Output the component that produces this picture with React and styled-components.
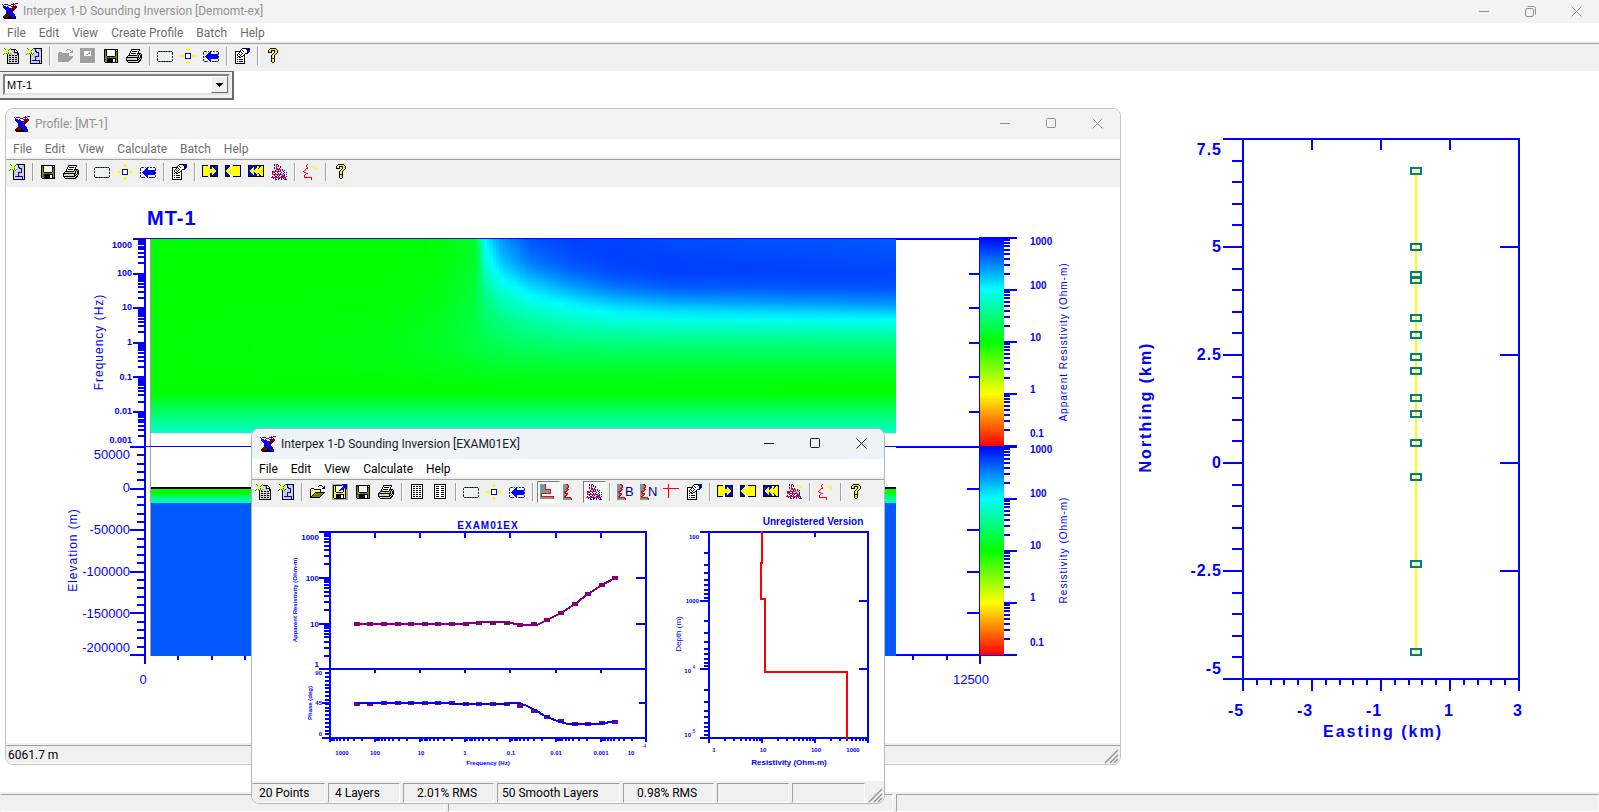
import React from 'react';
import styled, { createGlobalStyle } from 'styled-components';

const GlobalStyle = createGlobalStyle`
  *, *::before, *::after { box-sizing: border-box; }
  body {
    margin: 0;
    background: #fff;
    color: #000;
    font: 12px/16px Roboto, "Liberation Sans", sans-serif;
  }
`;

/* ---------- shell ---------- */

const Desktop = styled.div`
  position: relative;
  display: flex;
  flex-direction: column;
  min-height: 100vh;
  background: #fff;
`;

const Workspace = styled.main`
  flex: 1;
  display: flex;
  align-items: flex-start;
  justify-content: flex-end;
`;

const ChildWindow = styled.section`
  position: absolute;
  left: ${(p) => p.$left}px;
  top: ${(p) => p.$top}px;
  width: ${(p) => p.$width}px;
  display: flex;
  flex-direction: column;
  overflow: hidden;
  background: #fff;
  border: 1px solid ${(p) => (p.$active ? '#b4b8bc' : '#c4c4c4')};
  border-radius: 8px;
`;

const TitleBar = styled.header`
  display: flex;
  align-items: center;
  height: ${(p) => (p.$main ? 23 : 30)}px;
  padding-left: ${(p) => (p.$main ? 2 : 8)}px;
  padding-bottom: 1px;
  background: ${(p) => (p.$active ? '#edf3f9' : '#f3f3f3')};
  color: ${(p) => (p.$active ? '#1b1b1b' : '#919191')};
`;

const TitleText = styled.h1`
  flex: 1;
  margin: 0 0 0 5px;
  font-size: 12px;
  font-weight: 400;
`;

const Caption = styled.button`
  width: 46px;
  height: 100%;
  padding: 0;
  border: 0;
  background: none;
  color: inherit;
  display: flex;
  align-items: center;
  justify-content: center;
`;

const MenuBar = styled.nav`
  display: flex;
  height: 20px;
  background: #fff;
  border-bottom: 2px solid #f0f0f0;
  color: ${(p) => (p.$active ? '#000' : '#6d6d6d')};
`;

const MenuItem = styled.button`
  padding: 2px 6px 0 7px;
  border: 0;
  background: none;
  color: inherit;
  font: inherit;
`;

const Tools = styled.div`
  display: flex;
  align-items: flex-start;
  height: 28px;
  padding-top: 1px;
  background: #f0f0f0;
  border-top: 1px solid #a0a0a0;
`;

const ToolButton = styled.button`
  display: flex;
  align-items: center;
  width: 23px;
  height: 22px;
  padding: 0 0 0 2px;
  border: 1px solid;
  border-color: ${(p) => (p.$pressed ? '#808080 #fff #fff #808080' : 'transparent')};
  background: ${(p) => (p.$pressed ? '#f8f8f8' : 'none')};
`;

const Divider = styled.span`
  width: 2px;
  height: 18px;
  margin: 2px 3px;
  border-left: 1px solid #a0a0a0;
  border-right: 1px solid #fff;
`;

const DialogBar = styled.div`
  align-self: flex-start;
  width: 234px;
  height: 29px;
  padding: 2px 2px 3px 3px;
  background: #f0f0f0;
  border: solid #696969;
  border-width: 1px 2px 2px 0;
`;

const Combo = styled.div`
  position: relative;
  height: 21px;
  background: #fff;
  border: 2px solid;
  border-color: #808080 #e3e3e3 #e3e3e3 #808080;
`;

const ComboSelect = styled.select`
  appearance: none;
  width: 100%;
  height: 17px;
  padding: 0 20px 0 2px;
  border: 0;
  background: none;
  color: #000;
  font: 11px/16px "Liberation Sans", sans-serif;
`;

const ComboArrow = styled.span`
  position: absolute;
  top: 0;
  right: 0;
  width: 17px;
  height: 17px;
  display: flex;
  align-items: center;
  justify-content: center;
  background: #f0f0f0;
  border: 1px solid;
  border-color: #fff #696969 #696969 #fff;
  pointer-events: none;
`;

const StatusBar = styled.footer`
  display: flex;
  gap: 3px;
  height: ${(p) => p.$height || 20}px;
  padding-top: 2px;
  background: #f0f0f0;
`;

const StatusCell = styled.span`
  flex: ${(p) => (p.$width ? `0 0 ${p.$width}px` : '1')};
  display: flex;
  align-items: center;
  padding-left: ${(p) => p.$indent || 1}px;
  border: 1px solid;
  border-color: #a0a0a0 #fff #fff ${(p) => (p.$open ? 'transparent' : '#a0a0a0')};
  white-space: nowrap;
`;

const GripBox = styled.span`
  align-self: flex-end;
  width: 16px;
  height: 16px;
  margin-left: ${(p) => (p.$overlap ? -20 : 0)}px;
`;

const Plot = styled.svg`
  display: block;
  width: ${(p) => (p.$width ? `${p.$width}px` : '100%')};
  shape-rendering: crispEdges;
`;

const PlotText = styled.text`
  fill: #00f;
  font-family: "Liberation Sans", Arial, sans-serif;
  font-size: ${(p) => p.$size}px;
  font-weight: ${(p) => (p.$bold ? 700 : 400)};
  letter-spacing: ${(p) => p.$track || 0}px;
  text-anchor: ${(p) => p.$anchor || 'middle'};
  dominant-baseline: central;
`;

/* ---------- icons ---------- */

const INK = {
  K: '#000000', W: '#ffffff', Y: '#ffff00', O: '#808000', B: '#0000ff', N: '#000080',
  T: '#008080', R: '#ff0000', G: '#a0a0a0', g: '#d0d0d0', M: '#800000', S: '#6b9f9f',
  P: '#600090', D: '#2f4f4f',
};

const ART = {
  logo: [
    '...........P.PPP', 'P.PPPP...PPPP...', '.P....PPP..P.M..', '.BBB.P...PBMMMM.',
    '.BBBBBB...MMMMM.', '..BBBBBBKMMMMM..', '...BBBBBBMMMM...', '....BBBBBKMM....',
    '....BBBBBBM.....', '....MBBBBBB.....', '....MKBBBBBB....', '...MMMKBBBBBB...',
    '..MMMMMKBBBBB...', '.KMMMMMKBBBBBB..', '.KKKMKKKKKBBBK..', '..KKKKKKKKKKKK..',
  ],
  newDoc: [
    '.T..Y..T........', '..T.Y.T.KKKKK...', 'Y..YYT.YYggKWK..', '.YYYYYY.gggKWWK.',
    '...YYTY.gggKKKK.', '.TYTYT.TggggggKK', 'T..YK.T.ggggggKK', '...YKgKKgKKgKKgK',
    '....KggggggggggK', '....KgKKgKKgKKgK', '....KggggggggggK', '....KgKKgKKgKKgK',
    '....KggggggggggK', '....KgKKgKKgKKgK', '....KggggggggggK', '....KKKKKKKKKKKK',
  ],
  newMap: [
    '.T..Y..TKKKKKKKK', '..T.Y.T.gBggggGK', 'Y..YYT.YgBggggGK', '.YYYYYY.gBBggggK',
    '...YYTY.ggBBBggK', '.TYTYT.TggggBggK', 'T..YK.T.ggggBggK', '...YKgggggggBggK',
    '....KggggBBBBggK', '....KggggBgggggK', '....KggggBgggggK', '....KggggBgggggK',
    '....KgBBBBBBBBgK', '....KggggggggBgK', '....KggggggggBgK', '....KKKKKKKKKKKK',
  ],
  open: [
    '................', '..........KKK...', '.........K...K.K', '..............KK',
    '..KKK........KKK', '.KYWYKKKKKKK....', '.KWYWYWYWYWK....', '.KYWYWYWYWYK....',
    '.KWYWYKKKKKKKKKK', '.KYWYKOOOOOOOOK.', '.KWYKOOOOOOOOK..', '.KYKOOOOOOOOK...',
    '.KKOOOOOOOOK....', '.KKKKKKKKKK.....', '................', '................',
  ],
  openOff: [
    '................', '..........GGG...', '.........G...G.G', '..............GG',
    '..GGG........GGG', '.GGGGGGGGGGG....', '.GGGGGGGGGGG....', '.GGGGGGGGGGG....',
    '.GGGGGGGGGGGGGGG', '.GGGGGGGGGGGGGGG', '.GGGGGGGGGGGGGG.', '.GGGGGGGGGGGGG..',
    '.GGGGGGGGGGGG...', '.GGGGGGGGGGG....', '................', '................',
  ],
  exportOff: [
    'GGGGGGGGGGGGGGGW', 'GGGGGGGGGGGGGGGW', 'GGGGGGGGGGGGGGGW', 'GGGGWWWWWWWGGGGW',
    'GGGGWWWWWGWGGGGW', 'GGGGWWWWGGWGGGGW', 'GGGGWWGGWWWGGGGW', 'GGGGWWWWWWWGGGGW',
    'GGGGGGGGGGGGGGGW', 'GGGGGGGGGGGGGGGW', 'GGGGGGGGGGGGGGGW', 'GGGGGGGGGGGGGGGW',
    'GGGGGGGGGGGGGGGW', 'GGGGGGGGGGGGGGGW', 'GGGGGGGGGGGGGGGW', 'WWWWWWWWWWWWWWWW',
  ],
  export: [
    'GGGGGGGGGGBBBBBG', 'GKKKKKKKKKGBBBBG', 'GKYKWWWWWWWBBBBG', 'GKYKWWWWWWBBBBBG',
    'GKYKWWWWWBBBGKBG', 'GKYKWWWWBBBKYKGG', 'GKYKWWWBBWWKYKGG', 'GKYKWWWWWWWKYKGG',
    'GKYYKKKKKKKYYKGG', 'GKYYYYYYYYYYYKGG', 'GKYYKKKKKKKKYKGG', 'GKYYKKKKKWWKYKGG',
    'GKYYKKKKKWWKYKGG', 'GKYYKKKKKWWKYKGG', 'GGKKKKKKKKKKKKGG', 'GGGGGGGGGGGGGGGG',
  ],
  save: [
    '................', '.KKKKKKKKKKKKKK.', '.KOKWWWWWWWWKWK.', '.KOKWWWWWWWWKKK.',
    '.KOKWWWWWWWWKOK.', '.KOKWWWWWWWWKOK.', '.KOKWWWWWWWWKOK.', '.KOKWWWWWWWWKOK.',
    '.KOOKKKKKKKKOOK.', '.KOOOOOOOOOOOOK.', '.KOOKKKKKKKKKOK.', '.KOOKKKKKKWWKOK.',
    '.KOOKKKKKKWWKOK.', '.KOOKKKKKKWWKOK.', '..KKKKKKKKKKKKK.', '................',
  ],
  print: [
    '................', '.....KKKKKKKKK..', '.....KWWWWWWWK..', '....KWKKKKKWK...',
    '....KWWWWWWWK...', '...KWKKKKKWKKKK.', '...KWWWWWWWKgKgK', '..KKKKKKKKKgKgKK',
    '.KggggggggggKgKK', 'KKKKKKKKKKKKKgKK', 'KggggggYYYgKgKgK', 'KggggggggggKKgK.',
    'KKKKKKKKKKKKgKK.', '.KggggggggggKK..', '..KKKKKKKKKKK...', '................',
  ],
  fit: [
    '.......YY.......', '......YYYY......', '.......YY.......', '................',
    '................', '.....BBBBBB.....', '..Y..BWWWWB..Y..', 'YYYY.BWWWWB.YYYY',
    'YYYY.BWWWWB.YYYY', '..Y..BWWWWB..Y..', '.....BBBBBB.....', '................',
    '................', '.......YY.......', '......YYYY......', '.......YY.......',
  ],
  marquee: [
    '................', '................', '................', '.DKDKDDKDKDDKDK.',
    'D..............D', 'K..............K', '...............D', 'D...............',
    'K..............K', '...............D', 'D...............', 'K..............D',
    'D..............K', '.DKDDKDKDDKDKDD.', '................', '................',
  ],
  recall: [
    '................', '................', '................', '.DKD.D.BD.KD.DK.',
    'D.....BB.......D', 'K....BBB.......K', 'D...BBBBBBBBBBBD', '...BBBBBBBBBBBB.',
    'K.BBBBBBBBBBBBBK', 'D..BBBBBBBBBBBBD', '....BBBBBBBBBBB.', 'K....BBB.......D',
    'D.....BB.......K', '.DKDD..B.DKDKDD.', '................', '................',
  ],
  props: [
    '........KKKKKBNB', '.......KWWWWKBNB', '......KWKWWWWKNB', '.KKKKKKWWKWWWKNB',
    '.KWWWKWKWWWWWKB.', '.KWWKWWWKWWKKK..', '.KWKWKWKWWK.....', '.KWKWWKWWKK.....',
    '.KWWKKWKKWK.....', '.KWKWKKWWWK.....', '.KWWWWWWWWK.....', '.KWKWKKKKWK.....',
    '.KWWWWWWWWK.....', '.KWKWKKKKWK.....', '.KWWWWWWWWK.....', '.KKKKKKKKKK.....',
  ],
  help: [
    '.....KKKKKK.....', '....KYYYYYYK....', '...KYYKKKKYYK...', '...KYYK..KYYK...',
    '...KKKK..KYYK...', '........KYYK....', '.......KYYK.....', '......KYYK......',
    '......KYYK......', '......KYYK......', '......KKKK......', '......KYYK......',
    '......KYYK......', '......KYYK......', '.......KK.......', '................',
  ],
  table: [
    '..KKKKKKKKKKKK..', '..KWWWWWWWWWWK..', '..KWKKWKKWKKWK..', '..KWWWWWWWWWWK..',
    '..KWKKWKKWKKWK..', '..KWWWWWWWWWWK..', '..KWKKWKKWKKWK..', '..KWWWWWWWWWWK..',
    '..KWKKWKKWKKWK..', '..KWWWWWWWWWWK..', '..KWKKWKKWKKWK..', '..KWWWWWWWWWWK..',
    '..KWKKWKKWKKWK..', '..KWWWWWWWWWWK..', '..KKKKKKKKKKKK..', '................',
  ],
  list: [
    '..KKKKKKKKKKKK..', '..KWWWWWWWWWWK..', '..KWKKKWWKKKWK..', '..KWWWWWWWWWWK..',
    '..KWKKKWWKKKWK..', '..KWWWWWWWWWWK..', '..KWKKKWWKKKWK..', '..KWWWWWWWWWWK..',
    '..KWKKKWWKKKWK..', '..KWWWWWWWWWWK..', '..KWKKKWWKKKWK..', '..KWWWWWWWWWWK..',
    '..KWKKKWWKKKWK..', '..KWWWWWWWWWWK..', '..KKKKKKKKKKKK..', '................',
  ],
  stepNext: [
    '................', 'KKKKKK..KKKKKKKK', 'KYYYYY..BBBBBBBK', 'KYYYYYYYBBYBBBBK',
    'KYYYYYYYBBYYBBBK', 'KYYYYYYYYYYYYBBK', 'KYYYYYYYYYYYYYBK', 'KYYYYYYYYYYYYYBK',
    'KYYYYYYYYYYYYBBK', 'KYYYYYYYBBYYBBBK', 'KYYYYYYYBBYBBBBK', 'KYYYYY..BBBBBBBK',
    'KKKKKK..KKKKKKKK', '................', '................', '................',
  ],
  stepPrev: [
    '................', 'KKKKK...KKKKKKKK', 'KBBBB..YYYYYYYYK', 'KBBBY..YYYYYYYYK',
    'KBBYY.YYYYYYYYYK', 'KBYYYYYYYYYYYYYK', 'BYYYYYYYYYYYYYYK', 'BYYYYYYYYYYYYYYK',
    'KBYYYYYYYYYYYYYK', 'KBBYY.YYYYYYYYYK', 'KBBBY..YYYYYYYYK', 'KBBBB..YYYYYYYYK',
    'KKKKK...KKKKKKKK', '................', '................', '................',
  ],
  stepAll: [
    '................', 'KKKKKKKKKKKKKKKK', 'KBBBBBBBBYYBBYYK', 'KBBBBYBBBYYBYYYK',
    'KBBBYYBBYYBYYYYK', 'KBBYYYBYYYYYYYYK', 'KBYYYYYYYYYYYYYK', 'KBYYYYYYYYYYYYYK',
    'KBBYYYBYYYYYYYYK', 'KBBBYYBBYYBYYYYK', 'KBBBBYBBBYYBYYYK', 'KBBBBBBBBYYBBYYK',
    'KKKKKKKKKKKKKKKK', '................', '................', '................',
  ],
  smooth: [
    '...B.RB.........', '...B.R.B........', '.....R.B.B......', '...B.R...B......',
    '...B.RB.B.......', '.....RRRRR.B....', '....B..B.R.B.B..', '.BRRRRRRRR..B...',
    '.RRB..B...B..B.B', '.R..B..B.B..B...', '.RRRRRRRRRRR.B.B', '...B..B.B..RRB..',
    '.B..BB.B..BBRR.B', 'RRRRRRRRRRRRRRR.', '..B.B..BB.B.B.B.', '....BB.B..B..BBB',
  ],
  smoothRun: [
    '...B.RB.........', '...B.R.B...YYY..', '.....R.B..Y...Y.', '...B.R....Y..YYY',
    '...B.RB.B.....Y.', '.....RRRRR.B....', '....B..B.R.B.B..', '.BRRRRRRRR..B...',
    '.RRB..B...B..B..', '.RRRRRRRRRRR.B..', '...B..B.B..RRB..', '.B..BB.B..BBRR..',
    'RRRRRRRRRRRRRRR.', '..B.B..BB.B.B.B.', '....BB.B..B..BBB', '................',
  ],
  invert: [
    '.....R..........', '....R...........', '....R......YYY..', '.....R....Y...Y.',
    '....RR.......YYY', '...R..........Y.', '..R.............', '.R..............',
    '..RR............', '....RR..........', '...R............', '..R.............',
    '..R.............', '..RRRRRRRR......', '.........R......', '.........R......',
  ],
  layered: [
    'SSSSSR..........', 'SSSSSR..........', 'SSSSSR..........', 'SSSSSR..........',
    'SSSSSR..........', 'SSSSSRRRRRR.....', 'SSSSSSSSSSR.....', 'SSSSSSSSSSR.....',
    'SSSSSSSSSSR.....', 'SRRRRRRRRRR.....', 'SR..............', 'SR..............',
    'SRRRRRRRRRRRRR..', 'SSSSSSSSSSSSSR..', 'SSSSSSSSSSSSSR..', '................',
  ],
  curve: [
    'SSSRR...........', 'SSSSRR..........', 'SSSSSR..........', 'SSSSRR..........',
    'SSSRR...........', 'SSSSRR..........', 'SSSRR...........', 'SRRR............',
    'SRR.............', 'SSRRR...........', 'SSSRR...........', 'SSRR............',
    'SRR.............', 'SRRRRRRR........', 'SSSSSSSRR.......', 'SSSSSSSSR.......',
  ],
  axes: [
    '.....R..........', '.....R..........', '.....R..........', '.....R..........',
    'RRRRRRRRRRRRRRRR', '.....R..........', '.....R..........', '.....R..........',
    '.....R..........', '.....R..........', '.....R..........', '.....R..........',
    '.....R..........', '.....R..........', '................', '................',
  ],
};

const LETTERED = { curveB: 'B', curveN: 'N' };

function Icon({ name }) {
  const letter = LETTERED[name];
  const rows = ART[letter ? 'curve' : name];
  const cells = [];
  rows.forEach((row, y) => {
    let x = 0;
    while (x < row.length) {
      const ink = row[x];
      let end = x + 1;
      while (row[end] === ink) end += 1;
      if (INK[ink]) {
        cells.push(<rect key={`${x}-${y}`} x={x} y={y} width={end - x} height="1" fill={INK[ink]} />);
      }
      x = end;
    }
  });
  return (
    <svg width="16" height="16" viewBox="0 0 16 16" overflow="visible" shapeRendering="crispEdges" aria-hidden="true">
      {cells}
      {letter && (
        <text x="8" y="12" fontSize="13" fontFamily="Liberation Sans, sans-serif" fill="#000080">{letter}</text>
      )}
    </svg>
  );
}

function CaptionButtons({ restored }) {
  return (
    <>
      <Caption aria-label="Minimize">
        <svg width="11" height="11" viewBox="0 0 11 11"><path d="M0 5.5H10" stroke="currentColor" fill="none" /></svg>
      </Caption>
      <Caption aria-label="Maximize">
        <svg width="11" height="11" viewBox="0 0 11 11" fill="none" stroke="currentColor">
          {restored ? (
            <>
              <rect x="0.5" y="2.5" width="8" height="8" rx="1.5" />
              <path d="M2.5 0.5H8.5A2 2 0 0 1 10.5 2.5V8.5" />
            </>
          ) : (
            <rect x="0.5" y="0.5" width="9" height="9" rx="1" />
          )}
        </svg>
      </Caption>
      <Caption aria-label="Close">
        <svg width="11" height="11" viewBox="0 0 11 11"><path d="M0.5 0.5L10.5 10.5M10.5 0.5L0.5 10.5" stroke="currentColor" /></svg>
      </Caption>
    </>
  );
}

function Grip({ overlap }) {
  return (
    <GripBox $overlap={overlap}>
      <svg width="16" height="16" viewBox="0 0 16 16" stroke="#909090" strokeWidth="1.4">
        <path d="M1 15L14 2M6 15L14 7M10 15L14 11" />
      </svg>
    </GripBox>
  );
}

function Menu({ items, active }) {
  return (
    <MenuBar $active={active}>
      {items.map((item) => <MenuItem key={item}>{item}</MenuItem>)}
    </MenuBar>
  );
}

function ToolStrip({ items, pressed = [] }) {
  return (
    <Tools role="toolbar">
      {items.map((name, i) =>
        name === '|' ? (
          <Divider key={i} />
        ) : (
          <ToolButton key={i} aria-label={name} $pressed={pressed.includes(name)}>
            <Icon name={name} />
          </ToolButton>
        )
      )}
    </Tools>
  );
}

/* ---------- plot helpers ---------- */

const range = (n) => Array.from({ length: n }, (_, i) => i);
const Line = ({ x1, y1, x2, y2, w = 2, c = '#0000ff' }) => (
  <line x1={x1} y1={y1} x2={x2} y2={y2} stroke={c} strokeWidth={w} />
);
const HTicks = ({ ys, x1, x2 }) => <path d={ys.map((y) => `M${x1} ${Math.round(y)}H${x2}`).join('')} stroke="#00f" strokeWidth="2" />;
const VTicks = ({ xs, y1, y2 }) => <path d={xs.map((x) => `M${Math.round(x)} ${y1}V${y2}`).join('')} stroke="#00f" strokeWidth="2" />;

/* Positions of the 2..9 marks of each decade; falling axes bunch up after the major tick. */
function logMarks(start, decade, count, falling) {
  return range(count).flatMap((d) =>
    [2, 3, 4, 5, 6, 7, 8, 9].map((k) => {
      const f = Math.log10(k);
      return start + decade * (d + (falling ? 1 - f : f));
    })
  );
}

function Upright({ x, y, children, ...rest }) {
  return (
    <PlotText x={x} y={y} transform={`rotate(-90 ${x} ${y})`} {...rest}>{children}</PlotText>
  );
}

/* ---------- pseudo-section ---------- */

const FIELD_Y = [239, 260, 275, 290, 305, 320, 335, 350, 365, 380, 392, 410, 433];
const FIELD = [
  [151, [1, 1, 1, 1, 1, 1, 1, 1, 1, 1, 1, 1.35, 1.8]],
  [380, [1, 1, 1, 1.01, 1.02, 1.04, 1.06, 1.07, 1.05, 1.01, 1, 1.35, 1.8]],
  [440, [1.04, 1.04, 1.05, 1.07, 1.09, 1.12, 1.14, 1.14, 1.1, 1.03, 1, 1.35, 1.8]],
  [474, [1.16, 1.16, 1.2, 1.22, 1.25, 1.26, 1.26, 1.23, 1.14, 1.04, 1, 1.35, 1.8]],
  [484, [2.05, 1.88, 1.72, 1.58, 1.48, 1.4, 1.34, 1.27, 1.16, 1.05, 1, 1.35, 1.8]],
  [500, [2.4, 2.25, 2.05, 1.84, 1.66, 1.5, 1.4, 1.3, 1.18, 1.05, 1, 1.35, 1.8]],
  [530, [2.68, 2.55, 2.35, 2.1, 1.86, 1.66, 1.5, 1.35, 1.2, 1.06, 1, 1.35, 1.8]],
  [570, [2.75, 2.7, 2.56, 2.32, 2.02, 1.78, 1.57, 1.38, 1.21, 1.06, 1, 1.35, 1.8]],
  [610, [2.75, 2.75, 2.69, 2.49, 2.16, 1.86, 1.61, 1.4, 1.21, 1.06, 1, 1.35, 1.8]],
  [670, [2.7, 2.75, 2.75, 2.61, 2.27, 1.91, 1.63, 1.4, 1.21, 1.05, 1, 1.35, 1.8]],
  [896, [2.65, 2.7, 2.74, 2.66, 2.4, 1.98, 1.65, 1.4, 1.2, 1.03, 1, 1.35, 1.8]],
];

function mix(points, at) {
  let i = 0;
  while (i < points.length - 2 && at > points[i + 1]) i += 1;
  const t = Math.min(1, Math.max(0, (at - points[i]) / (points[i + 1] - points[i])));
  return [i, t];
}

function shade(v) {
  if (v >= 2) return `rgb(0,${Math.round(255 * (3 - v))},255)`;
  return `rgb(0,255,${Math.round(255 * Math.max(0, v - 1))})`;
}

const STRIP = 3;
const FIELD_X = FIELD.map((c) => c[0]);
const STRIPS = range(Math.ceil(745 / STRIP)).map((n) => {
  const x = 151 + n * STRIP;
  const [i, t] = mix(FIELD_X, x);
  return {
    x,
    width: Math.min(STRIP, 896 - x),
    stops: range(25).map((s) => {
      const at = s / 24;
      const [j, u] = mix(FIELD_Y, 239 + at * 194);
      const a = FIELD[i][1];
      const b = FIELD[i + 1][1];
      const left = a[j] + (a[j + 1] - a[j]) * u;
      const right = b[j] + (b[j + 1] - b[j]) * u;
      return [at, shade(left + (right - left) * t)];
    }),
  };
});

function PseudoSection() {
  return (
    <g>
      <defs>
        {STRIPS.map((s, n) => (
          <linearGradient key={n} id={`strip${n}`} x1="0" x2="0" y1="0" y2="1">
            {s.stops.map(([o, c]) => <stop key={o} offset={o} stopColor={c} />)}
          </linearGradient>
        ))}
      </defs>
      {STRIPS.map((s, n) => <rect key={n} x={s.x} y="239" width={s.width} height="194" fill={`url(#strip${n})`} />)}
    </g>
  );
}

/* ---------- charts ---------- */

function ColourScale({ top, labels, title, titleY }) {
  const majors = range(5).map((i) => top + i * 52);
  return (
    <g>
      <rect x="980" y={top - 1} width="24" height="209" fill="url(#scale)" />
      <HTicks ys={majors} x1={1004} x2={1017} />
      <HTicks ys={logMarks(top, 52, 4, true)} x1={1004} x2={1010} />
      {['1000', '100', '10', '1', '0.1'].map((t, i) => (
        <PlotText key={t} x="1030" y={labels[i]} $size={10} $bold $anchor="start">{t}</PlotText>
      ))}
      <Upright x={1063} y={titleY} $size={10} $track={1}>{title}</Upright>
    </g>
  );
}

function ProfileChart() {
  const freq = range(7).map((i) => 239 + i * 34.6);
  const elev = range(6).map((i) => 447 + i * 41.6);
  const freqLabels = [['1000', 245], ['100', 273], ['10', 307], ['1', 342], ['0.1', 377], ['0.01', 411], ['0.001', 440]];
  const elevLabels = [['50000', 454], ['0', 487], ['-50000', 529], ['-100000', 571], ['-150000', 613], ['-200000', 647]];
  return (
    <Plot viewBox="6 187 1114 556" role="img" aria-label="MT-1 profile">
      <defs>
        <linearGradient id="scale" x1="0" x2="0" y1="0" y2="1">
          <stop offset="0" stopColor="#0000ff" />
          <stop offset="0.25" stopColor="#00ffff" />
          <stop offset="0.5" stopColor="#00ff00" />
          <stop offset="0.75" stopColor="#ffff00" />
          <stop offset="1" stopColor="#ff0000" />
        </linearGradient>
        <linearGradient id="layer" x1="0" x2="0" y1="0" y2="1">
          <stop offset="0.3" stopColor="#00ff00" />
          <stop offset="0.6" stopColor="#00ff80" />
          <stop offset="1" stopColor="#00ffb0" />
        </linearGradient>
      </defs>
      <PlotText x="147" y="218" $size={20} $bold $track={1} $anchor="start">MT-1</PlotText>
      <PseudoSection />
      <rect x="151" y="489" width="745" height="14" fill="url(#layer)" />
      <rect x="151" y="503" width="745" height="153" fill="#0058ff" />
      <Line x1={151} y1={488} x2={896} y2={488} c="#000" />
      <rect x="150" y="238" width="1" height="418" fill="#a0a0a0" />
      <rect x="133" y="238" width="846" height="1" fill="#00f" />
      <rect x="133" y="446" width="846" height="1" fill="#00f" />
      <Line x1={896} y1={239} x2={979} y2={239} />
      <Line x1={896} y1={447} x2={979} y2={447} />
      <Line x1={896} y1={655} x2={1017} y2={655} />
      <Line x1={145} y1={238} x2={145} y2={664} />
      <rect x="979" y="237" width="1" height="427" fill="#00f" />
      <HTicks ys={freq} x1={133} x2={145} />
      <HTicks ys={logMarks(239, 34.6, 6, true)} x1={138} x2={145} />
      <HTicks ys={elev} x1={130} x2={145} />
      <HTicks ys={range(25).map((i) => 447 + i * 8.32)} x1={137} x2={145} />
      <HTicks ys={freq.slice(1, 6)} x1={969} x2={979} />
      <HTicks ys={elev.slice(1, 5)} x1={967} x2={979} />
      <VTicks xs={range(24).map((i) => 145 + (i + 1) * 33.4)} y1={656} y2={660} />
      <VTicks xs={[980]} y1={654} y2={664} />
      {freqLabels.map(([t, y]) => <PlotText key={t} x="132" y={y} $size={9} $bold $anchor="end">{t}</PlotText>)}
      {elevLabels.map(([t, y]) => <PlotText key={t} x="130" y={y} $size={13} $anchor="end">{t}</PlotText>)}
      <PlotText x="143" y="679" $size={13}>0</PlotText>
      <PlotText x="971" y="679" $size={13}>12500</PlotText>
      <Upright x={99} y={342} $size={12} $track={1}>Frequency (Hz)</Upright>
      <Upright x={73} y={550} $size={12} $track={1}>Elevation (m)</Upright>
      <ColourScale top={238} labels={[241, 285, 337, 389, 433]} title="Apparent Resistivity (Ohm-m)" titleY={342} />
      <ColourScale top={447} labels={[449, 493, 545, 597, 642]} title="Resistivity (Ohm-m)" titleY={550} />
    </Plot>
  );
}

const RESISTIVITY = [
  [357, 624], [370, 624], [384, 624], [398, 624], [411, 624], [425, 624], [438, 624], [452, 624], [466, 624],
  [479, 623], [493, 623], [507, 623], [520, 625], [534, 624], [547, 620], [561, 613], [575, 604], [588, 594],
  [602, 585], [615, 578],
];
const PHASE_Y = [704, 704, 703, 703, 703, 703, 703, 703, 704, 704, 704, 704, 706, 711, 717, 721, 724, 724, 723, 722];

function SoundingChart() {
  const decades = range(8).map((i) => 330 + i * 45.1);
  const depth = range(4).map((i) => 532 + i * 68.7);
  return (
    <Plot viewBox="252 507 632 274" role="img" aria-label="EXAM01EX sounding">
      <PlotText x="488" y="525" $size={10} $bold $track={1}>EXAM01EX</PlotText>
      <path d="M330 532H646V738H330ZM330 669H646" fill="none" stroke="#00f" strokeWidth="2" />
      <HTicks ys={[532, 578, 624, 669]} x1={319} x2={330} />
      <HTicks ys={logMarks(532, 45.8, 3, true)} x1={324} x2={330} />
      <HTicks ys={[578, 624]} x1={636} x2={646} />
      <HTicks ys={range(17).map((i) => 673 + i * 3.84)} x1={325} x2={330} />
      <HTicks ys={[703, 738]} x1={322} x2={330} />
      <HTicks ys={[703]} x1={639} x2={646} />
      <VTicks xs={decades.slice(1, 7)} y1={532} y2={538} />
      <VTicks xs={decades.slice(1, 7)} y1={669} y2={673} />
      <VTicks xs={decades} y1={738} y2={742} />
      <VTicks xs={logMarks(330, 45.1, 7, true)} y1={738} y2={741} />
      {[['1000', 537], ['100', 578], ['10', 624], ['1', 664]].map(([t, y]) => (
        <PlotText key={t} x="319" y={y} $size={8} $bold $anchor="end">{t}</PlotText>
      ))}
      {[['90', 673], ['45', 703], ['0', 734]].map(([t, y]) => (
        <PlotText key={t} x="322" y={y} $size={6} $bold $anchor="end">{t}</PlotText>
      ))}
      {[['1000', 342], ['100', 375], ['10', 421], ['1', 465], ['0.1', 511], ['0.01', 556], ['0.001', 601], ['10', 631]].map(([t, x]) => (
        <PlotText key={x} x={x} y="753" $size={6} $bold>{t}</PlotText>
      ))}
      <PlotText x="644" y="746" $size={5}>-4</PlotText>
      <PlotText x="488" y="763" $size={6} $bold>Frequency (Hz)</PlotText>
      <Upright x={295} y={600} $size={6} $bold>Apparent Resistivity (Ohm-m)</Upright>
      <Upright x={310} y={703} $size={6} $bold>Phase (deg)</Upright>

      <path
        d="M357 624H466L479 622L507 622L520 625H537L547 620L561 613L575 604L588 594L602 585L615 578"
        fill="none" stroke="#800080" strokeWidth="2"
      />
      {RESISTIVITY.map(([x, y]) => <rect key={x} x={x - 3} y={y - 2} width="6" height="4" fill="#800080" />)}
      {RESISTIVITY.map(([x], i) => <rect key={x} x={x - 3} y={PHASE_Y[i] - 2} width="6" height="4" fill="#800080" />)}
      <path
        d="M357 703H438L466 704L507 704L513 703H519L527 706L537 711L543 715L557 721L568 724H600L615 721"
        fill="none" stroke="#00f" strokeWidth="2"
      />

      <PlotText x="813" y="521" $size={10} $bold>Unregistered Version</PlotText>
      <path d="M709 532H868V738H709Z" fill="none" stroke="#00f" strokeWidth="2" />
      <HTicks ys={depth} x1={700} x2={709} />
      <HTicks ys={logMarks(532, 68.7, 3, false)} x1={704} x2={709} />
      <HTicks ys={depth.slice(1, 3)} x1={859} x2={868} />
      <VTicks xs={[762, 815]} y1={532} y2={537} />
      <VTicks xs={[709, 762, 815, 868]} y1={738} y2={743} />
      <VTicks xs={logMarks(709, 53, 3, false)} y1={738} y2={741} />
      {[['100', 537, 699], ['1000', 601, 699], ['10', 671, 691], ['10', 735, 691]].map(([t, y, x]) => (
        <PlotText key={y} x={x} y={y} $size={6} $bold $anchor="end">{t}</PlotText>
      ))}
      <PlotText x="694" y="667" $size={5}>4</PlotText>
      <PlotText x="694" y="731" $size={5}>5</PlotText>
      {[['1', 714], ['10', 763], ['100', 816], ['1000', 853]].map(([t, x]) => (
        <PlotText key={x} x={x} y="750" $size={6} $bold>{t}</PlotText>
      ))}
      <PlotText x="789" y="762" $size={8} $bold>Resistivity (Ohm-m)</PlotText>
      <Upright x={678} y={634} $size={8}>Depth (m)</Upright>
      <path d="M762 531V563H761V599H765V672H847V739" fill="none" stroke="#f00" strokeWidth="2" />
    </Plot>
  );
}

const STATIONS = [171, 247, 275, 280, 318, 335, 357, 371, 398, 414, 443, 477, 564, 652];

function StationMap() {
  const north = range(6).map((i) => 139 + i * 108);
  const east = range(5).map((i) => 1243 + i * 69);
  const northLabels = [['7.5', 149], ['5', 246], ['2.5', 354], ['0', 462], ['-2.5', 570], ['-5', 668]];
  const eastLabels = [['-5', 1236], ['-3', 1305], ['-1', 1374], ['1', 1449], ['3', 1518]];
  return (
    <Plot $width={479} viewBox="1120 100 479 692" role="img" aria-label="Station map">
      <path d="M1243 139H1519V679H1243Z" fill="none" stroke="#00f" strokeWidth="2" />
      <HTicks ys={north} x1={1223} x2={1243} />
      <HTicks ys={range(25).map((i) => 139 + i * 21.6)} x1={1232} x2={1243} />
      <HTicks ys={north.slice(1, 5)} x1={1500} x2={1519} />
      <VTicks xs={east.slice(1, 4)} y1={139} y2={150} />
      <VTicks xs={east} y1={679} y2={691} />
      <VTicks xs={range(20).map((i) => 1243 + i * 13.8)} y1={679} y2={685} />
      <Line x1={1416} y1={170} x2={1416} y2={653} c="#ffff00" />
      {STATIONS.map((y) => (
        <rect key={y} x="1411" y={y - 3} width="10" height="6" fill="none" stroke="#008080" strokeWidth="2" />
      ))}
      {northLabels.map(([t, y]) => <PlotText key={t} x="1222" y={y} $size={16} $bold $track={1} $anchor="end">{t}</PlotText>)}
      {eastLabels.map(([t, x]) => <PlotText key={t} x={x} y="710" $size={16} $bold $track={1}>{t}</PlotText>)}
      <PlotText x="1383" y="731" $size={16} $bold $track={2}>Easting (km)</PlotText>
      <Upright x={1145} y={407} $size={16} $bold $track={2}>Northing (km)</Upright>
    </Plot>
  );
}

/* ---------- application ---------- */

export default function App() {
  return (
    <>
      <GlobalStyle />
      <Desktop>
        <TitleBar $main>
          <Icon name="logo" />
          <TitleText>Interpex 1-D Sounding Inversion [Demomt-ex]</TitleText>
          <CaptionButtons restored />
        </TitleBar>
        <Menu items={['File', 'Edit', 'View', 'Create Profile', 'Batch', 'Help']} />
        <ToolStrip
          items={['newDoc', 'newMap', '|', 'openOff', 'exportOff', 'save', 'print', '|', 'marquee', 'fit', 'recall', '|', 'props', '|', 'help']}
        />
        <DialogBar>
          <Combo>
            <ComboSelect aria-label="Profile" defaultValue="MT-1">
              <option>MT-1</option>
            </ComboSelect>
            <ComboArrow>
              <svg width="7" height="4" viewBox="0 0 7 4" shapeRendering="crispEdges"><path d="M0 0H7V1H6V2H5V3H4V4H3V3H2V2H1V1H0Z" /></svg>
            </ComboArrow>
          </Combo>
        </DialogBar>
        <Workspace>
          <StationMap />
        </Workspace>
        <StatusBar>
          <StatusCell $open />
          <StatusCell />
          <StatusCell $width={703} />
        </StatusBar>

        <ChildWindow $left={5} $top={108} $width={1116}>
          <TitleBar>
            <Icon name="logo" />
            <TitleText as="h2">Profile: [MT-1]</TitleText>
            <CaptionButtons />
          </TitleBar>
          <Menu items={['File', 'Edit', 'View', 'Calculate', 'Batch', 'Help']} />
          <ToolStrip
            items={['newMap', '|', 'save', 'print', '|', 'marquee', 'fit', 'recall', '|', 'props', '|', 'stepNext', 'stepPrev', 'stepAll', 'smooth', '|', 'invert', '|', 'help']}
          />
          <ProfileChart />
          <StatusBar $height={21}>
            <StatusCell $open>6061.7 m</StatusCell>
            <Grip overlap />
          </StatusBar>
        </ChildWindow>

        <ChildWindow $left={251} $top={428} $width={634} $active>
          <TitleBar $active>
            <Icon name="logo" />
            <TitleText as="h2">Interpex 1-D Sounding Inversion [EXAM01EX]</TitleText>
            <CaptionButtons />
          </TitleBar>
          <Menu active items={['File', 'Edit', 'View', 'Calculate', 'Help']} />
          <ToolStrip
            pressed={['layered', 'smooth']}
            items={['newDoc', 'newMap', '|', 'open', 'export', 'save', 'print', '|', 'table', 'list', '|', 'marquee', 'fit', 'recall', '|', 'layered', 'curve', 'smooth', '|', 'curveB', 'curveN', 'axes', 'props', '|', 'stepNext', 'stepPrev', 'stepAll', 'smoothRun', '|', 'invert', '|', 'help']}
          />
          <SoundingChart />
          <StatusBar $height={22}>
            <StatusCell $width={73} $indent={6} $open>20 Points</StatusCell>
            <StatusCell $width={72} $indent={6}>4 Layers</StatusCell>
            <StatusCell $width={91} $indent={13}>2.01% RMS</StatusCell>
            <StatusCell $width={123} $indent={4}>50 Smooth Layers</StatusCell>
            <StatusCell $width={91} $indent={13}>0.98% RMS</StatusCell>
            <StatusCell $width={72} />
            <StatusCell $width={73} />
            <Grip />
          </StatusBar>
        </ChildWindow>
      </Desktop>
    </>
  );
}
